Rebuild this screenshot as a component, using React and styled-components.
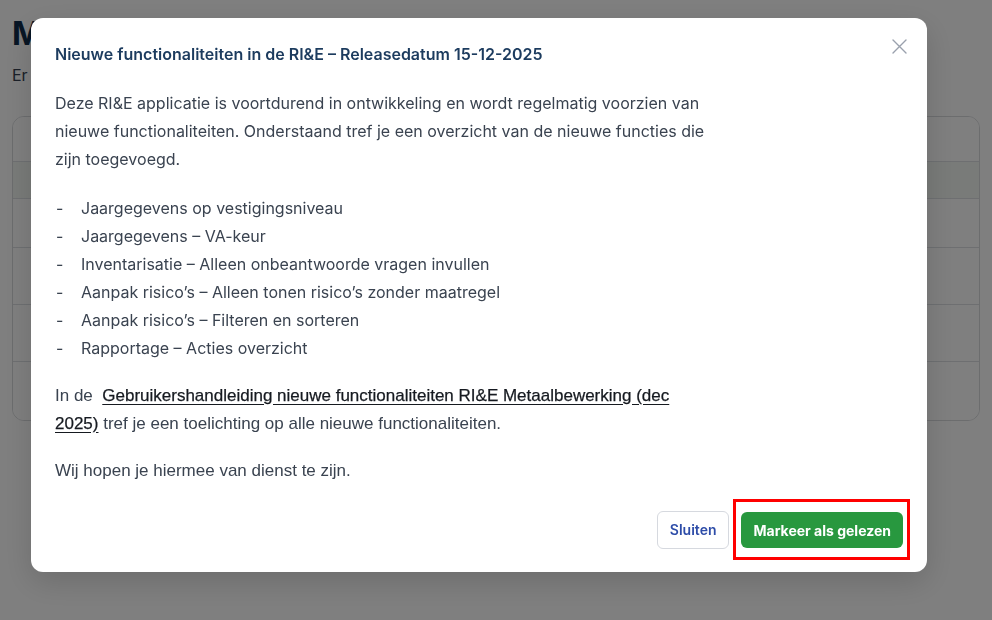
import React from 'react';
import styled, { createGlobalStyle } from 'styled-components';

const GlobalStyle = createGlobalStyle`
  html, body {
    margin: 0;
    padding: 0;
    background: #ffffff;
    font-family: Inter, "Noto Sans", sans-serif;
  }
  * {
    box-sizing: border-box;
  }
`

/* page behind the dialog */
const Page = styled.div`
  height: 620px;
  overflow: hidden;
  padding: 14px 12px 0 12px;
`
const PageTitle = styled.h1`
  margin: 0;
  font-size: 32px;
  line-height: 40px;
  font-weight: 700;
  color: #0f2c4a;
`
const PageSubtitle = styled.p`
  margin: 10px 0 0 0;
  font-size: 16px;
  line-height: 22px;
  color: #374151;
`
const Card = styled.div`
  margin-top: 30px;
  border: 1px solid #d8dadd;
  border-radius: 12px;
  overflow: hidden;
`
const CardRow = styled.div`
  height: ${props => props.height}px;
  background: ${props => props.tint ? '#f3f6f2' : '#ffffff'};
  border-top: ${props => props.first ? 'none' : '1px solid #dcdfe3'};
`

/* overlay + dialog */
const Overlay = styled.div`
  position: fixed;
  inset: 0;
  background: rgba(0, 0, 0, 0.5);
  padding: 18px 0 0 31px;
`
const Dialog = styled.div`
  position: relative;
  width: 896px;
  background: #ffffff;
  border-radius: 12px;
  box-shadow: 0 10px 30px rgba(0, 0, 0, 0.15);
  padding: 26px 24px 12px 24px;
`
const CloseButton = styled.button`
  position: absolute;
  top: 16px;
  right: 16px;
  width: 24px;
  height: 24px;
  padding: 0;
  border: none;
  background: transparent;
  display: flex;
  align-items: center;
  justify-content: center;
  cursor: pointer;
`
const Title = styled.h2`
  margin: 0;
  font-size: 16px;
  line-height: 20px;
  font-weight: 600;
  color: #1c3b5e;
`
const Body = styled.div`
  margin-top: 25px;
  max-width: 660px;
  font-size: 16px;
  line-height: 28px;
  color: #3a4350;
`
const Paragraph = styled.p`
  margin: 0 0 ${props => props.spacing}px 0;
  font-family: ${props => props.narrow ? '"Liberation Sans", Arial, sans-serif' : 'inherit'};
  font-size: ${props => props.narrow ? 17 : 16}px;
`
const List = styled.ul`
  list-style: none;
  margin: 0 0 20px 0;
  padding: 0;
`
const ListItem = styled.li`
  position: relative;
  padding-left: 26px;

  &::before {
    content: '-';
    position: absolute;
    left: 1px;
    top: 0;
  }
`
const Link = styled.a`
  color: #161a20;
  text-decoration: underline;
  text-underline-offset: 3px;
  -webkit-text-stroke: 0.25px #161a20;
`
const Footer = styled.div`
  display: flex;
  justify-content: flex-end;
  align-items: center;
  gap: 4px;
  margin-right: -7px;
`
const SecondaryButton = styled.button`
  height: 38px;
  padding: 0 12px;
  border: 1px solid #d6d9df;
  border-radius: 6px;
  background: #ffffff;
  color: #2d4ca8;
  font-family: Inter, sans-serif;
  font-size: 14px;
  font-weight: 600;
  cursor: pointer;
`
const Highlight = styled.div`
  border: 3px solid #ff0000;
  padding: 10px 4px 9px 5px;
`
const PrimaryButton = styled.button`
  height: 36px;
  padding: 0 12px;
  border: none;
  border-radius: 6px;
  background: #28983f;
  color: #ffffff;
  font-family: Inter, sans-serif;
  font-size: 14px;
  font-weight: 700;
  cursor: pointer;
`

const items = [
  'Jaargegevens op vestigingsniveau',
  'Jaargegevens – VA-keur',
  'Inventarisatie – Alleen onbeantwoorde vragen invullen',
  'Aanpak risico’s – Alleen tonen risico’s zonder maatregel',
  'Aanpak risico’s – Filteren en sorteren',
  'Rapportage – Acties overzicht',
];

const rows = [
  { height: 44 },
  { height: 37, tint: true },
  { height: 49 },
  { height: 57 },
  { height: 57 },
  { height: 59 },
];

const App = () => (
  <>
    <GlobalStyle />
    <Page>
      <PageTitle>Meldingen</PageTitle>
      <PageSubtitle>Er zijn nieuwe meldingen beschikbaar</PageSubtitle>
      <Card>
        { rows.map((r, i) => (
          <CardRow key={ i } first={ i === 0 } height={ r.height } tint={ r.tint } />
        )) }
      </Card>
    </Page>
    <Overlay>
      <Dialog role="dialog">
        <CloseButton aria-label="Sluiten">
          <svg width="15" height="15" viewBox="0 0 15 15" fill="none">
            <path d="M1 1 L14 14 M14 1 L1 14" stroke="#9aa1ad" strokeWidth="1.4" strokeLinecap="round" />
          </svg>
        </CloseButton>
        <Title>Nieuwe functionaliteiten in de RI&amp;E – Releasedatum 15-12-2025</Title>
        <Body>
          <Paragraph spacing={ 21 }>
            Deze RI&amp;E applicatie is voortdurend in ontwikkeling en wordt regelmatig voorzien van
            nieuwe functionaliteiten. Onderstaand tref je een overzicht van de nieuwe functies die
            zijn toegevoegd.
          </Paragraph>
          <List>
            { items.map(item => <ListItem key={ item }>{ item }</ListItem>) }
          </List>
          <Paragraph narrow spacing={ 19 }>
            In de&nbsp; <Link href="#">Gebruikershandleiding nieuwe functionaliteiten RI&amp;E Metaalbewerking (dec 2025)</Link> tref je een toelichting op alle nieuwe functionaliteiten.
          </Paragraph>
          <Paragraph narrow spacing={ 14 }>Wij hopen je hiermee van dienst te zijn.</Paragraph>
        </Body>
        <Footer>
          <SecondaryButton>Sluiten</SecondaryButton>
          <Highlight>
            <PrimaryButton>Markeer als gelezen</PrimaryButton>
          </Highlight>
        </Footer>
      </Dialog>
    </Overlay>
  </>
);

export default App;
